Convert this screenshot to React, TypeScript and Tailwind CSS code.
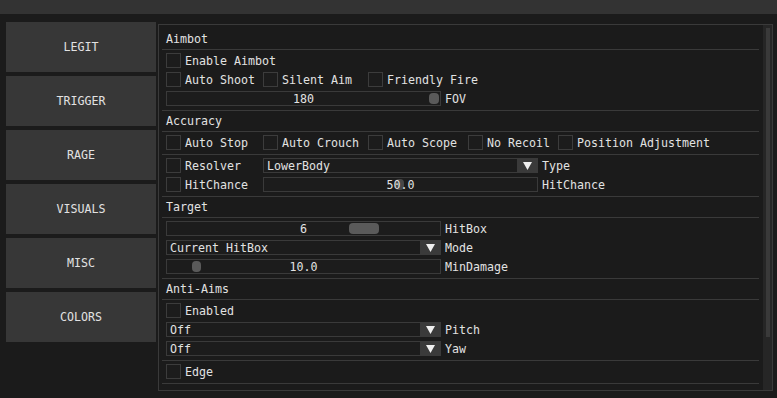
import React from "react";

const FONT = { fontFamily: '"DejaVu Sans Mono", "Liberation Mono", monospace' };

function Txt({ children, className = "" }: { children: React.ReactNode; className?: string }) {
  return <span className={"block whitespace-pre text-[11.63px] leading-[13px] text-[#e2e2e2] " + className}>{children}</span>;
}

function Header({ children }: { children: React.ReactNode }) {
  return (
    <div className="h-[13px] pt-px">
      <Txt>{children}</Txt>
    </div>
  );
}

function Sep() {
  return <div className="h-px -mb-px -mx-[4px] bg-[#3a3a3a]" />;
}

function Row({ children }: { children: React.ReactNode }) {
  return <div className="flex h-[15px] items-start">{children}</div>;
}

function Check({ label, w }: { label: string; w?: string }) {
  return (
    <div className={"flex items-start shrink-0 " + (w ?? "")}>
      <div className="w-[15px] h-[15px] border border-[#3c3c3c] bg-[#1c1c1c]" />
      <Txt className="pt-[2px] ml-[4px]">{label}</Txt>
    </div>
  );
}

function Slider({ value, grabLeft, grabW, grabColor = "bg-[#5a5a5a]" }: { value: string; grabLeft: number; grabW: number; grabColor?: string }) {
  return (
    <div className="relative w-[275px] h-[15px] border border-[#3a3a3a] bg-[#1c1c1c] shrink-0">
      <div className={"absolute top-px h-[11px] rounded-[4px] " + grabColor} style={{ left: grabLeft, width: grabW }} />
      <div className="relative flex justify-center">
        <Txt className="pt-px">{value}</Txt>
      </div>
    </div>
  );
}

function Combo({ value }: { value: string }) {
  return (
    <div className="flex w-[275px] h-[15px] border border-[#3a3a3a] bg-[#1c1c1c] shrink-0">
      <div className="flex-1 pl-[3px]">
        <Txt className="pt-px">{value}</Txt>
      </div>
      <div className="w-[20px] h-full bg-[#3a3a3a] flex items-center justify-center">
        <svg width="9" height="8" viewBox="0 0 9 8">
          <polygon points="0,0 9,0 4.5,8" fill="#f0f0f0" />
        </svg>
      </div>
    </div>
  );
}

function Label({ children }: { children: React.ReactNode }) {
  return <Txt className="pt-[2px] ml-[4px]">{children}</Txt>;
}

const tabs = ["LEGIT", "TRIGGER", "RAGE", "VISUALS", "MISC", "COLORS"];

export default function App() {
  return (
    <div className="w-[777px] h-[398px] bg-[#1b1b1b] flex flex-col overflow-hidden" style={FONT}>
      <div className="h-[14px] bg-[#333333] shrink-0" />
      <div className="flex pl-[6px] pt-[8px]">
        <div className="flex flex-col gap-[4px] w-[150px] shrink-0">
          {tabs.map((t) => (
            <div key={t} className="h-[50px] bg-[#373737] flex items-center justify-center">
              <Txt className="pt-px">{t}</Txt>
            </div>
          ))}
        </div>
        <div className="ml-[2px] mt-[2px] w-[615px] h-[367px] border border-[#3a3a3a] flex">
          <div className="flex-1 pl-[7px] pr-[8px] pt-[7px] flex flex-col gap-[4px]">
            <Header>Aimbot</Header>
            <Sep />
            <Row><Check label="Enable Aimbot" /></Row>
            <Row>
              <Check label="Auto Shoot" w="w-[97px]" />
              <Check label="Silent Aim" w="w-[105px]" />
              <Check label="Friendly Fire" />
            </Row>
            <Row>
              <Slider value="180" grabLeft={262} grabW={10} />
              <Label>FOV</Label>
            </Row>
            <Sep />
            <Header>Accuracy</Header>
            <Sep />
            <Row>
              <Check label="Auto Stop" w="w-[97px]" />
              <Check label="Auto Crouch" w="w-[105px]" />
              <Check label="Auto Scope" w="w-[100px]" />
              <Check label="No Recoil" w="w-[90px]" />
              <Check label="Position Adjustment" />
            </Row>
            <Sep />
            <Row>
              <Check label="Resolver" w="w-[97px]" />
              <Combo value="LowerBody" />
              <Label>Type</Label>
            </Row>
            <Row>
              <Check label="HitChance" w="w-[97px]" />
              <Slider value="50.0" grabLeft={131} grabW={9} grabColor="bg-[#474747]" />
              <Label>HitChance</Label>
            </Row>
            <Sep />
            <Header>Target</Header>
            <Sep />
            <Row>
              <Slider value="6" grabLeft={182} grabW={30} />
              <Label>HitBox</Label>
            </Row>
            <Row>
              <Combo value="Current HitBox" />
              <Label>Mode</Label>
            </Row>
            <Row>
              <Slider value="10.0" grabLeft={25} grabW={9} />
              <Label>MinDamage</Label>
            </Row>
            <Sep />
            <Header>Anti-Aims</Header>
            <Sep />
            <Row><Check label="Enabled" /></Row>
            <Row>
              <Combo value="Off" />
              <Label>Pitch</Label>
            </Row>
            <Row>
              <Combo value="Off" />
              <Label>Yaw</Label>
            </Row>
            <Sep />
            <Row><Check label="Edge" /></Row>
            <Sep />
          </div>
          <div className="w-[9px] h-full bg-[#262626] pt-[3px] pl-[3px] shrink-0">
            <div className="w-[4px] h-[309px] bg-[#3a3a3a]" />
          </div>
        </div>
      </div>
    </div>
  );
}
